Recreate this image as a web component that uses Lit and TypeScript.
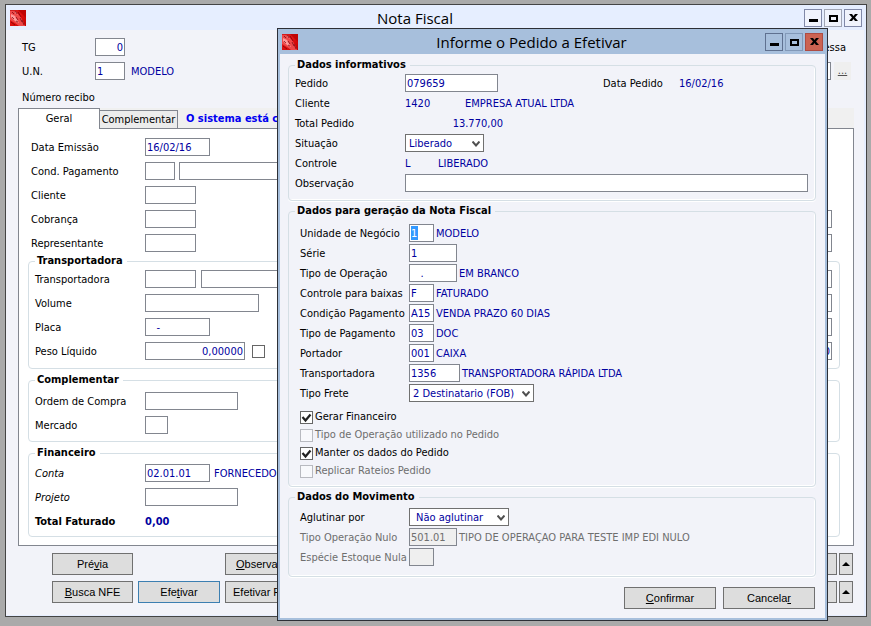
import { LitElement, html, css, svg, nothing } from "lit";
import { customElement } from "lit/decorators.js";
import { classMap } from "lit/directives/class-map.js";

interface Field {
  id: string;
  label: string;
  value?: string;
  size: string;
  note?: string;
  extra?: string;
  right?: string | null;
  disabled?: boolean;
  picked?: boolean;
  numeric?: boolean;
}

const appIcon = html`<svg class="app-icon" viewBox="0 0 16 16" aria-hidden="true">
  <defs>
    <linearGradient id="red" x1="0" y1="0" x2="1" y2="1">
      <stop offset="0" stop-color="#d02020" />
      <stop offset="0.5" stop-color="#e01010" />
      <stop offset="1" stop-color="#c00000" />
    </linearGradient>
  </defs>
  <rect width="16" height="16" fill="url(#red)" />
  <path d="M8 0h8v8z" fill="#c00404" />
  <path d="M0 1h5l5 5 3 5 2 5H9L5 13 0 10z" fill="#ee4848" />
  <path d="M1 4l4 2 4 7-4-2-4-4zM5 1l3 4-3-2z" fill="#ff9a9a" />
  <path d="M2 2l2 2M5 1l2 3M8 2l3 5M2 7l2 2M6 7l2 3M10 8l2 4M12 10l2 5M6 11l2 1M1 12l4 3" stroke="#70000a" stroke-width="0.7" fill="none" />
</svg>`;

const glyphs = {
  min: svg`<path d="M4 9h9v3H4z" />`,
  max: svg`<path d="M4 5h9v7H4zM6 7v3h5V7z" fill-rule="evenodd" />`,
  close: svg`<path d="M4 4h3l1.500 2L10 4h3L10 7.500 13 11h-3L8.500 9 7 11H4L7 7.500z" />`,
};

const chevron = html`<svg class="chevron" viewBox="0 0 8 6" aria-hidden="true">
  <path d="M0.500 0.500L4 4.500 7.500 0.500" fill="none" stroke="#505050" stroke-width="2" />
</svg>`;

const mainFields: Field[] = [
  { id: "data", label: "Data Emissão", value: "16/02/16", size: "w65" },
  { id: "cond", label: "Cond. Pagamento", size: "w30", extra: "wide near" },
  { id: "cliente", label: "Cliente", size: "w51" },
  { id: "cobranca", label: "Cobrança", size: "w51", right: "" },
  { id: "repres", label: "Representante", size: "w51", right: "" },
];

const invoiceFields: Field[] = [
  { id: "unidade", label: "Unidade de Negócio", value: "1", size: "w25", note: "MODELO", picked: true },
  { id: "serie", label: "Série", value: "1", size: "w48" },
  { id: "operacao", label: "Tipo de Operação", value: "   .", size: "w48", note: "EM BRANCO" },
  { id: "baixas", label: "Controle para baixas", value: "F", size: "w25", note: "FATURADO" },
  { id: "condicao", label: "Condição Pagamento", value: "A15", size: "w25", note: "VENDA PRAZO 60 DIAS" },
  { id: "tipopag", label: "Tipo de Pagamento", value: "03", size: "w25", note: "DOC" },
  { id: "portador", label: "Portador", value: "001", size: "w25", note: "CAIXA" },
  { id: "transp", label: "Transportadora", value: "1356", size: "w51", note: "TRANSPORTADORA RÁPIDA LTDA" },
];

const options = [
  { id: "gerar", label: "Gerar Financeiro", on: true },
  { id: "utilizado", label: "Tipo de Operação utilizado no Pedido", on: false },
  { id: "manter", label: "Manter os dados do Pedido", on: true },
  { id: "replicar", label: "Replicar Rateios Pedido", on: false },
];

@customElement("app-root")
export class AppRoot extends LitElement {
  static styles = css`
    :host {
      display: block;
      position: relative;
      min-height: 100vh;
      box-sizing: border-box;
      padding: 4px 4px 9px 5px;
      overflow: hidden;
      background: #aaaaaa;
      color: #000;
      font: 11px/14px "DejaVu Sans Condensed", "DejaVu Sans", sans-serif;
      white-space: nowrap;
    }
    * { box-sizing: border-box; }
    .window {
      border: 1px solid #444;
      background: #f2f3f9;
      display: flex;
      flex-direction: column;
    }
    .main { box-shadow: inset -2px -1px #e6eeff; }
    .dialog {
      position: absolute;
      left: 277px;
      top: 28px;
      width: 551px;
      border-color: #2c2f36;
      background: #a7bfdc;
      padding: 0 2px 2px;
    }
    .titlebar {
      height: 25px;
      display: flex;
      align-items: center;
      gap: 2px;
      padding: 0 4px;
      background: #e6eeff;
    }
    .dialog .titlebar { background: transparent; padding: 0 2px; }
    .titlebar h1 {
      flex: 1;
      margin: 0;
      text-align: center;
      font: 15px/20px "Open Sans", "Noto Sans", sans-serif;
    }
    .app-icon { width: 16px; height: 16px; flex: none; }
    .control {
      width: 18px;
      height: 18px;
      padding: 0;
      border: 1px solid #8088a8;
      background: #f0f3fc;
      display: block;
    }
    .control svg { display: block; width: 16px; height: 16px; }
    .control.max { border-color: #a0a5b4; }
    .dialog .control { background: transparent; border-color: #5f7190; }
    .dialog .control.max { border-color: #8299b8; }
    .dialog .control.close { background: #cc6352; border-color: #ae4c43; }

    .body { padding: 5px 12px 13px; }
    .head { padding: 0 3px 0 4px; }
    .row { display: flex; align-items: center; height: 24px; }
    .row > label, .row > span:not(.combo) { padding-top: 2px; }
    .head .row label, .head .name { width: 73px; }
    .head .last { height: 25px; padding-top: 2px; }
    .end { margin-left: auto; }
    .end.word { margin-right: 5px; }
    input, select, button { font: inherit; margin: 0; border-radius: 0; }
    .text, select {
      height: 18px;
      border: 1px solid #82868f;
      background: #fff;
      color: #0000a0;
      padding: 0 1px;
      outline: none;
      flex: none;
      min-width: 0;
    }
    .text:disabled { background: #efefef; color: #6e6e6e; }
    .text.numeric { text-align: right; }
    .text.picked {
      color: #fff;
      background: linear-gradient(#3399ff, #3399ff) no-repeat 1px 1px / 7px 14px #fff;
    }
    .w23 { width: 23px; }
    .w25 { width: 25px; }
    .w30 { width: 30px; }
    .w48 { width: 48px; }
    .w51 { width: 51px; }
    .w65 { width: 65px; }
    .w79 { width: 79px; }
    .w93 { width: 93px; }
    .w100 { width: 100px; }
    .w114 { width: 114px; }
    .w125 { width: 125px; }
    .wide { width: 200px; margin-left: 5px; }
    .near { margin-left: 4px; }
    .note { color: #0000a0; margin-left: 4px; }
    .far { margin-left: 6px; }
    .more {
      width: 17px;
      height: 18px;
      margin-left: 3px;
      padding: 0;
      border: 0;
      background: #efefef;
      color: #505050;
      text-decoration: underline;
    }
    .tabs {
      display: flex;
      align-items: flex-end;
      height: 20px;
      background: #f0f0f0;
    }
    .tab {
      width: 78px;
      height: 18px;
      padding: 0;
      border: 1px solid #82868f;
      border-bottom: 0;
      border-left: 0;
      background: #ececec;
      color: #000;
    }
    .tab.active {
      width: 82px;
      height: 21px;
      margin-bottom: -1px;
      border-left: 1px solid #82868f;
      background: #fff;
      position: relative;
    }
    .alert {
      margin-left: 8px;
      color: #0000f0;
      font-weight: bold;
      line-height: 18px;
    }
    .panel {
      border: 1px solid #82868f;
      background: #fff;
      padding: 6px 13px 8px 9px;
    }
    .panel .row label, .panel .row .name { width: 110px; }
    .panel > .row { padding: 0 8px 0 3px; }
    .panel > .row label { width: 114px; }
    fieldset {
      margin: 0;
      min-width: 0;
      border: 1px solid #d5dfe5;
      border-radius: 4px;
    }
    legend {
      font: bold 11px/12px "DejaVu Sans Condensed", "DejaVu Sans", sans-serif;
      padding: 0 4px 0 2px;
    }
    .panel fieldset { padding: 3px 7px 4px 6px; margin-bottom: 5px; }
    .panel fieldset:first-of-type { padding: 0 7px 5px 6px; }
    .panel fieldset:last-of-type { padding: 2px 7px 3px 6px; margin-bottom: 0; }
    .slanted { font-style: italic; }
    .strong { font-weight: bold; }
    .strong.note { margin-left: 0; }
    .square {
      appearance: none;
      width: 13px;
      height: 13px;
      border: 1px solid #666;
      background: #fff;
      flex: none;
    }
    .panel .square { margin-left: 7px; }
    .push {
      height: 22px;
      border: 1px solid #707070;
      background: #dddddd;
      color: #000;
      padding: 0;
      font: 11px/18px "Liberation Sans", sans-serif;
    }
    .push.focus { border-color: #3c7fb1; }
    .push.cut { text-align: left; padding-left: 7px; }
    .push.third { padding-left: 10px; }
    .actions {
      display: grid;
      grid-template-columns: 81px 82px 90px 1fr;
      gap: 6px 5px;
      margin-top: 7px;
      padding: 0 1px 0 34px;
    }
    .third { grid-column: 3; }
    .pair { display: flex; justify-content: flex-end; gap: 2px; }
    .push.blank { width: 81px; }
    .push.up { width: 14px; display: grid; place-items: center; }
    .up svg { width: 8px; height: 4px; display: block; }

    .sheet { background: #f2f3f9; padding: 4px 9px 9px 8px; }
    .sheet fieldset {
      padding: 1px 7px 7px 6px;
      margin-bottom: 3px;
      box-shadow: inset -1px -1px #fff, 0 1px #fff;
    }
    .sheet .inset { padding: 5px 7px 6px 11px; }
    .sheet .foot { padding: 3px 7px 9px 11px; margin-bottom: 10px; }
    .sheet legend { line-height: 14px; }
    .sheet .inset legend { margin-left: -5px; }
    .sheet .row { height: 20px; }
    .sheet .row label, .sheet .row .name { width: 110px; }
    .sheet .inset .row label { width: 109px; }
    .sheet .note { margin-left: 2px; }
    .fill { flex: 1; }
    .sheet .row .date { width: 76px; margin-left: 105px; }
    .code { width: 60px; color: #0000a0; }
    .code.short { width: 33px; }
    .code.total { width: 98px; text-align: right; }
    .gray, .gray.note { color: #6e6e6e; }
    .combo { position: relative; display: flex; }
    select { appearance: none; border-color: #707070; padding: 2px 3px 0; }
    select.w100 { padding-left: 6px; }
    .chevron {
      position: absolute;
      right: 4px;
      top: 7px;
      width: 8px;
      height: 6px;
      pointer-events: none;
    }
    .checks { padding-top: 5px; }
    .check { display: flex; align-items: center; height: 18px; gap: 2px; }
    .box { position: relative; display: flex; }
    .box svg {
      position: absolute;
      left: 1px;
      top: 1px;
      width: 11px;
      height: 11px;
      pointer-events: none;
    }
    .square:disabled { border-color: #b8bac0; background: #f8f9fc; }
    .buttons { display: flex; justify-content: flex-end; gap: 7px; padding-right: 1px; }
    .buttons .push { width: 92px; }
  `;

  private control(kind: "min" | "max" | "close", name: string) {
    return html`<button class="control ${kind}" aria-label=${name}>
      <svg viewBox="0 0 16 16">${glyphs[kind]}</svg>
    </button>`;
  }

  private titlebar(title: string) {
    return html`<header class="titlebar">
      ${appIcon}
      <h1>${title}</h1>
      ${this.control("min", "Minimizar")}${this.control("max", "Maximizar")}${this.control("close", "Fechar")}
    </header>`;
  }

  private field(f: Field, scope = "m") {
    const id = `${scope}-${f.id}`;
    const cls = classMap({
      text: true,
      [f.size]: true,
      picked: !!f.picked,
      numeric: !!f.numeric,
    });
    return html`<div class="row">
      <label for=${id} class=${f.disabled ? "gray" : ""}>${f.label}</label>
      <input id=${id} class=${cls} .value=${f.value ?? ""} ?disabled=${!!f.disabled} />
      ${f.extra ? html`<input class="text ${f.extra}" aria-label="${f.label} descrição" />` : nothing}
      ${f.note ? html`<span class=${f.disabled ? "note gray" : "note"}>${f.note}</span>` : nothing}
      ${f.right !== undefined
        ? html`<input class="text w65 end numeric" aria-label="${f.label} complemento" .value=${f.right ?? ""} />`
        : nothing}
    </div>`;
  }

  private combo(id: string, label: string, value: string, size: string) {
    return html`<div class="row">
      <label for=${id}>${label}</label>
      <span class="combo"><select id=${id} class=${size}><option>${value}</option></select>${chevron}</span>
    </div>`;
  }

  private upButton() {
    return html`<button class="push up" aria-label="Mais opções">
      <svg viewBox="0 0 8 4"><path d="M4 0l4 4H0z" /></svg>
    </button>`;
  }

  private mainWindow() {
    return html`<section class="window main">
      ${this.titlebar("Nota Fiscal")}
      <div class="body">
        <div class="head">
          <div class="row">
            <label for="tg">TG</label>
            <input id="tg" class="text w30 numeric" value="0" />
            <span class="end word">essa</span>
          </div>
          <div class="row">
            <label for="un">U.N.</label>
            <input id="un" class="text w30" value="1" />
            <span class="note far">MODELO</span>
            <input class="text w65 end" aria-label="Data" />
            <button class="more" aria-label="Procurar">...</button>
          </div>
          <div class="row last"><span class="name">Número recibo</span></div>
        </div>
        <div class="tabs" role="tablist">
          <button class="tab active" role="tab" aria-selected="true">Geral</button>
          <button class="tab" role="tab" aria-selected="false">Complementar</button>
          <span class="alert">O sistema está c</span>
        </div>
        <div class="panel">
          ${mainFields.map((f) => this.field(f))}
          <fieldset>
            <legend>Transportadora</legend>
            ${this.field({ id: "tr", label: "Transportadora", size: "w51", extra: "wide", right: "" })}
            ${this.field({ id: "vol", label: "Volume", size: "w114", right: "" })}
            ${this.field({ id: "placa", label: "Placa", value: "   -", size: "w65", right: "" })}
            <div class="row">
              <label for="peso">Peso Líquido</label>
              <input id="peso" class="text w100 numeric" value="0,00000" />
              <input type="checkbox" class="square" aria-label="Peso manual" />
              <input class="text w65 end numeric" aria-label="Peso bruto" value="0" />
            </div>
          </fieldset>
          <fieldset>
            <legend>Complementar</legend>
            ${this.field({ id: "ordem", label: "Ordem de Compra", size: "w93" })}
            ${this.field({ id: "mercado", label: "Mercado", size: "w23" })}
          </fieldset>
          <fieldset>
            <legend>Financeiro</legend>
            <div class="row">
              <label class="slanted" for="conta">Conta</label>
              <input id="conta" class="text w65" value="02.01.01" />
              <span class="note">FORNECEDO</span>
            </div>
            <div class="row">
              <label class="slanted" for="projeto">Projeto</label>
              <input id="projeto" class="text w93" />
            </div>
            <div class="row strong">
              <span class="name">Total Faturado</span>
              <span class="note strong">0,00</span>
            </div>
          </fieldset>
        </div>
        <div class="actions">
          <button class="push">Pré<u>v</u>ia</button>
          <button class="push cut third"><u>O</u>bserva</button>
          <div class="pair"><button class="push blank" aria-label="Opções"></button>${this.upButton()}</div>
          <button class="push"><u>B</u>usca NFE</button>
          <button class="push focus">Efe<u>t</u>ivar</button>
          <button class="push cut">Efetivar F</button>
          <div class="pair"><button class="push blank" aria-label="Opções"></button>${this.upButton()}</div>
        </div>
      </div>
    </section>`;
  }

  private dialog() {
    return html`<section class="window dialog" role="dialog" aria-label="Informe o Pedido a Efetivar">
      ${this.titlebar("Informe o Pedido a Efetivar")}
      <div class="sheet">
        <fieldset>
          <legend>Dados informativos</legend>
          <div class="row">
            <label for="pedido">Pedido</label>
            <input id="pedido" class="text w93" value="079659" />
            <span class="name date">Data Pedido</span>
            <span class="code">16/02/16</span>
          </div>
          <div class="row">
            <span class="name">Cliente</span><span class="code">1420</span><span class="code">EMPRESA ATUAL LTDA</span>
          </div>
          <div class="row">
            <span class="name">Total Pedido</span><span class="code total">13.770,00</span>
          </div>
          ${this.combo("situacao", "Situação", "Liberado", "w79")}
          <div class="row">
            <span class="name">Controle</span><span class="code short">L</span><span class="code">LIBERADO</span>
          </div>
          <div class="row">
            <label for="obs">Observação</label>
            <input id="obs" class="text fill" />
          </div>
        </fieldset>
        <fieldset class="inset">
          <legend>Dados para geração da Nota Fiscal</legend>
          ${invoiceFields.map((f) => this.field(f, "d"))}
          ${this.combo("frete", "Tipo Frete", "2 Destinatario (FOB)", "w125")}
          <div class="checks">
            ${options.map(
              (o) => html`<div class="check">
                <span class="box">
                  <input id=${o.id} class="square" type="checkbox" .checked=${o.on} ?disabled=${!o.on} />
                  ${o.on
                    ? html`<svg viewBox="0 0 11 11"><path d="M1.500 5l3 3.500L9.500 2.500" fill="none" stroke="#222" stroke-width="2.200" /></svg>`
                    : nothing}
                </span>
                <label for=${o.id} class=${o.on ? "" : "gray"}>${o.label}</label>
              </div>`
            )}
          </div>
        </fieldset>
        <fieldset class="inset foot">
          <legend>Dados do Movimento</legend>
          ${this.combo("aglutinar", "Aglutinar por", "Não aglutinar", "w100")}
          ${this.field({
            id: "nulo",
            label: "Tipo Operação Nulo",
            value: "501.01",
            size: "w48",
            note: "TIPO DE OPERAÇAO PARA TESTE IMP EDI NULO",
            disabled: true,
          }, "d")}
          ${this.field({ id: "especie", label: "Espécie Estoque Nula", size: "w25", disabled: true }, "d")}
        </fieldset>
        <div class="buttons">
          <button class="push"><u>C</u>onfirmar</button>
          <button class="push">Cancela<u>r</u></button>
        </div>
      </div>
    </section>`;
  }

  render() {
    return html`${this.mainWindow()}${this.dialog()}`;
  }
}
